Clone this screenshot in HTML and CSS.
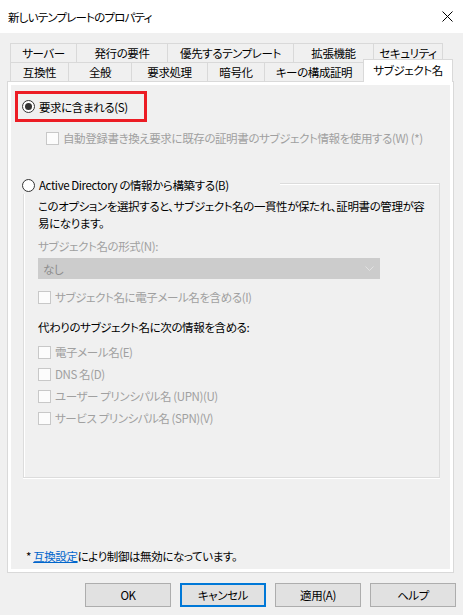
FILE: index.html
```html
<!DOCTYPE html>
<html lang="ja">
<head>
<meta charset="utf-8">
<title>新しいテンプレートのプロパティ</title>
<link rel="stylesheet" href="styles.css">
</head>
<body>
<div class="window">
  <div class="titlebar">
    <span class="title">新しいテンプレートのプロパティ</span>
    <svg class="close" width="11" height="11" viewBox="0 0 11 11"><path d="M0.5 0.5L10.5 10.5M10.5 0.5L0.5 10.5" stroke="#000" stroke-width="1" fill="none"/></svg>
  </div>

  <div class="tabs">
    <div class="tabrow row1">
      <div class="tab t-server">サーバー</div>
      <div class="tab t-issue">発行の要件</div>
      <div class="tab t-super">優先するテンプレート</div>
      <div class="tab t-ext">拡張機能</div>
      <div class="tab t-sec last">セキュリティ</div>
    </div>
    <div class="tabrow row2">
      <div class="tab t-compat">互換性</div>
      <div class="tab t-general">全般</div>
      <div class="tab t-req">要求処理</div>
      <div class="tab t-crypto">暗号化</div>
      <div class="tab t-attest">キーの構成証明</div>
      <div class="tab t-subject selected">サブジェクト名</div>
    </div>
  </div>

  <div class="panel">
    <div class="page">
      <div class="reqbox">
        <div class="radio-row">
          <span class="radio checked"></span>
          <span class="label">要求に含まれる(S)</span>
        </div>
      </div>

      <div class="check-row renew">
        <span class="checkbox"></span>
        <span class="label disabled">自動登録書き換え要求に既存の証明書のサブジェクト情報を使用する(W) (*)</span>
      </div>

      <div class="adgroup">
        <div class="adhead">
          <div class="radio-row adradio">
            <span class="radio"></span>
            <span class="label">Active Directory の情報から構築する(B)</span>
          </div>
          <div class="adhead-line"></div>
        </div>
        <div class="adbody">
          <p class="desc">このオプションを選択すると、サブジェクト名の一貫性が保たれ、証明書の管理が容<br>易になります。</p>
          <div class="label disabled fmt">サブジェクト名の形式(N):</div>
          <div class="select">
            <span class="select-text">なし</span>
            <svg class="chev" width="9" height="5" viewBox="0 0 9 5"><path d="M0.5 0.5L4.5 4.5L8.5 0.5" stroke="#e2e2e2" stroke-width="1" fill="none"/></svg>
          </div>
          <div class="check-row email">
            <span class="checkbox"></span>
            <span class="label disabled">サブジェクト名に電子メール名を含める(I)</span>
          </div>
          <div class="subhead">代わりのサブジェクト名に次の情報を含める:</div>
          <div class="check-list">
            <div class="check-row item"><span class="checkbox"></span><span class="label disabled">電子メール名(E)</span></div>
            <div class="check-row item"><span class="checkbox"></span><span class="label disabled">DNS 名(D)</span></div>
            <div class="check-row item"><span class="checkbox"></span><span class="label disabled">ユーザー プリンシパル名 (UPN)(U)</span></div>
            <div class="check-row item"><span class="checkbox"></span><span class="label disabled">サービス プリンシパル名 (SPN)(V)</span></div>
          </div>
        </div>
      </div>

      <div class="footnote">* <a class="link" href="#">互換設定</a>により制御は無効になっています。</div>
    </div>
  </div>

  <div class="buttons">
    <button class="btn">OK</button>
    <button class="btn default">キャンセル</button>
    <button class="btn">適用(A)</button>
    <button class="btn">ヘルプ</button>
  </div>
</div>
</body>
</html>
```

FILE: styles.css
```css
* { box-sizing: border-box; }
html, body { margin: 0; padding: 0; }
body {
  width: 463px;
  height: 615px;
  background: #f0f0f0;
  font-family: "Noto Sans CJK JP", sans-serif;
  font-feature-settings: "palt";
  font-size: 11.5px;
  letter-spacing: -0.4px;
  color: #000;
  overflow: hidden;
}
.window { width: 463px; height: 615px; display: flex; flex-direction: column; }

.titlebar {
  height: 33px;
  background: #fff;
  display: flex;
  align-items: center;
  justify-content: space-between;
  padding: 0 10px 0 8px;
}
.title { line-height: 16px; letter-spacing: -0.8px; }
.close { display: block; }

/* tabs */
.tabs { margin-top: 10px; padding-left: 10px; }
.tabrow { display: flex; height: 19px; }
.tab {
  height: 19px;
  border: 1px solid #d9d9d9;
  border-right: none;
  border-bottom: none;
  background: #f0f0f0;
  display: flex;
  align-items: center;
  justify-content: center;
  line-height: 16px;
  white-space: nowrap;
  flex: none;
}
.tab.last { border-right: 1px solid #d9d9d9; }
.t-server { width: 66px; }
.t-issue { width: 91px; }
.t-super { width: 126px; }
.t-ext { width: 80px; }
.t-sec { width: 70px; }
.t-compat { width: 58px; }
.t-general { width: 63px; }
.t-req { width: 76px; }
.t-crypto { width: 57px; }
.t-attest { width: 99px; }
.tab.selected {
  width: 90px;
  height: 23px;
  margin-top: -3px;
  margin-bottom: -1px;
  border-right: 1px solid #d9d9d9;
  background: #fff;
  position: relative;
  z-index: 1;
  align-items: flex-start;
  padding-top: 2px;
}

/* panel */
.panel {
  margin-left: 7px;
  width: 447px;
  height: 492px;
  border: 1px solid #d9d9d9;
  background: #fff;
  padding: 3px;
}
.page {
  height: 100%;
  background: #f0f0f0;
  display: flex;
  flex-direction: column;
  align-items: flex-start;
}

.label { line-height: 16px; white-space: nowrap; }
.disabled { color: #a0a0a0; }

.radio {
  width: 13px;
  height: 13px;
  border: 1px solid #333;
  border-radius: 50%;
  background: #fff;
  flex: none;
  display: flex;
  align-items: center;
  justify-content: center;
}
.radio.checked::after {
  content: "";
  width: 7px;
  height: 7px;
  border-radius: 50%;
  background: #333;
}
.radio-row { display: flex; align-items: center; gap: 4px; }

.checkbox {
  width: 13px;
  height: 13px;
  border: 1px solid #c8c8c8;
  background: #fcfcfc;
  flex: none;
}
.check-row { display: flex; align-items: center; gap: 4px; height: 16px; }

.reqbox {
  margin: 6px 0 0 4px;
  width: 132px;
  height: 31px;
  border: 3px solid #ec1c24;
  display: flex;
  align-items: center;
  padding-left: 4px;
}

.renew { margin-top: 8px; padding-left: 35px; }

/* Active Directory group */
.adgroup { margin-top: 30px; width: 100%; }
.adhead { display: flex; height: 18px; padding-left: 11px; }
.adradio { width: 258px; flex: none; height: 18px; }
.adhead-line {
  flex: 1;
  margin-top: 7px;
  margin-right: 10px;
  border-top: 1px solid #dcdcdc;
  border-right: 1px solid #dcdcdc;
  box-shadow: inset 0 1px 0 #fff;
}
.adbody {
  margin-left: 12px;
  margin-right: 10px;
  height: 284px;
  border: 1px solid #dcdcdc;
  border-top: none;
  box-shadow: inset 1px 0 0 #fff, 0 1px 0 #fff;
  padding: 4px 0 0 14px;
  display: flex;
  flex-direction: column;
  align-items: flex-start;
}
.desc { margin: 0; line-height: 17px; white-space: nowrap; }
.fmt { margin-top: 6px; line-height: 17px; }
.select {
  margin-top: 3px;
  width: 342px;
  height: 21px;
  background: #cccccc;
  display: flex;
  align-items: center;
  justify-content: space-between;
  padding: 0 6px 0 5px;
}
.select-text { color: #8c8c8c; line-height: 16px; }
.chev { display: block; }
.email { margin-top: 10px; }
.subhead { margin-top: 14px; line-height: 17px; white-space: nowrap; }
.check-list { margin-top: 5px; display: flex; flex-direction: column; }
.check-row.item { height: 22px; }

.footnote {
  margin-top: 70px;
  padding-left: 15px;
  line-height: 17px;
  white-space: nowrap;
}
.link { color: #0066cc; text-decoration: underline; }

/* buttons */
.buttons {
  margin-top: 10px;
  display: flex;
  justify-content: flex-end;
  gap: 9px;
  padding-right: 7px;
}
.btn {
  width: 86px;
  height: 24px;
  border: 1px solid #adadad;
  background: #e1e1e1;
  font-family: "Noto Sans CJK JP", sans-serif;
  font-feature-settings: "palt";
  font-size: 11.5px;
  letter-spacing: -0.4px;
  color: #000;
  padding: 0;
  line-height: 16px;
}
.btn.default { border: 2px solid #0078d7; }
```
